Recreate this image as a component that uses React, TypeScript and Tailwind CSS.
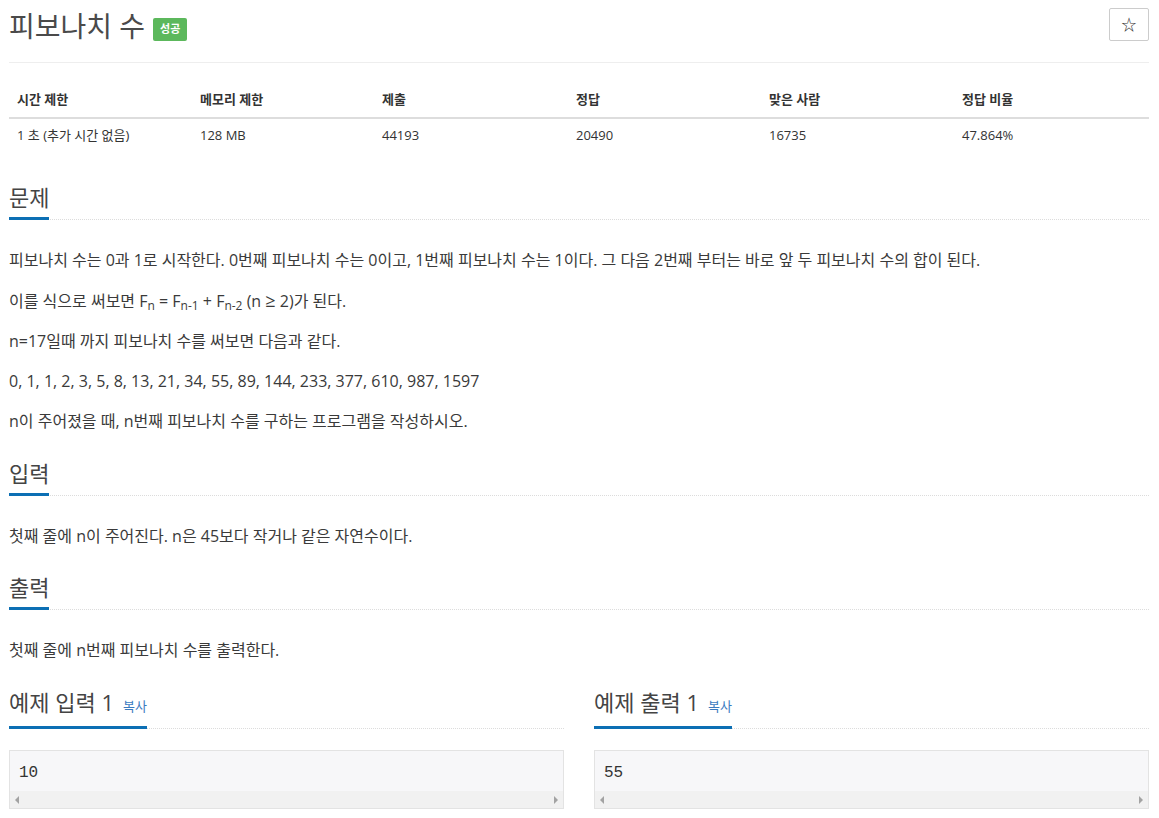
import React from "react";

const stats = [
  { label: "시간 제한", value: "1 초 (추가 시간 없음)" },
  { label: "메모리 제한", value: "128 MB" },
  { label: "제출", value: "44193" },
  { label: "정답", value: "20490" },
  { label: "맞은 사람", value: "16735" },
  { label: "정답 비율", value: "47.864%" },
];

function Headline({ title, copy }: { title: string; copy?: boolean }) {
  return (
    <div className="border-b border-dotted border-[#dcdcdc] flex">
      <h2 className="inline-flex items-baseline text-[22px] leading-[28px] pb-[6px] mb-[-1px] border-b-[3px] border-[#0c6fb4] text-[#444] font-normal">
        {title}
        {copy && <span className="ml-[9px] text-[13px] text-[#3b7bbf]">복사</span>}
      </h2>
    </div>
  );
}

function SampleBox({ text }: { text: string }) {
  return (
    <div className="mt-[21px] border border-[#e3e3e3] bg-[#f7f7f9]">
      <pre className="px-[9px] pt-[10px] pb-[6px] text-[16px] leading-[24px] text-[#333] font-['Liberation_Mono',monospace]">
        {text}
      </pre>
      <div className="h-[17px] bg-[#f1f1f1] flex items-center justify-between px-[5px]">
        <span className="w-0 h-0 border-y-[4px] border-y-transparent border-r-[4px] border-r-[#a3a3a3]" />
        <span className="w-0 h-0 border-y-[4px] border-y-transparent border-l-[4px] border-l-[#a3a3a3]" />
      </div>
    </div>
  );
}

export default function App() {
  return (
    <div className="min-h-screen bg-white px-[9px] pr-[10px] text-[#333] font-['Open_Sans','Noto_Sans_CJK_KR',sans-serif]">
      {/* Title */}
      <div className="flex items-start justify-between h-[63px] border-b border-[#eee]">
        <div className="flex items-end mt-[8px]">
          <h1 className="text-[28px] leading-[36px] text-[#4a4a4a] font-normal">피보나치 수</h1>
          <span className="ml-[8px] mb-[3px] h-[23px] px-[7px] flex items-center bg-[#5cb85c] text-white text-[11px] font-bold rounded-[2px]">
            성공
          </span>
        </div>
        <button className="mt-[8px] w-[40px] h-[33px] border border-[#ccc] rounded-[2px] bg-white text-[15px] text-[#333] flex items-center justify-center">
          ☆
        </button>
      </div>

      {/* Stats table */}
      <div className="mt-[19px] text-[13px]">
        <div className="grid grid-cols-[183px_182px_194px_193px_193px_1fr] border-b-2 border-[#ddd]">
          {stats.map((s) => (
            <div key={s.label} className="px-[8px] h-[35px] flex items-center font-bold text-[#333]">
              {s.label}
            </div>
          ))}
        </div>
        <div className="grid grid-cols-[183px_182px_194px_193px_193px_1fr]">
          {stats.map((s) => (
            <div key={s.label} className="px-[8px] h-[33px] flex items-center text-[#333]">
              {s.value}
            </div>
          ))}
        </div>
      </div>

      {/* 문제 */}
      <section className="mt-[31px]">
        <Headline title="문제" />
        <div className="mt-[28px] space-y-4 text-[16px] leading-[24px] text-[#3a3a3a]">
          <p>
            피보나치 수는 0과 1로 시작한다. 0번째 피보나치 수는 0이고, 1번째 피보나치 수는 1이다. 그 다음 2번째 부터는 바로 앞 두 피보나치 수의 합이 된다.
          </p>
          <p>
            이를 식으로 써보면 F<sub className="text-[12px]">n</sub> = F<sub className="text-[12px]">n-1</sub> + F
            <sub className="text-[12px]">n-2</sub> (n <span className="text-[18px]">≥</span> 2)가 된다.
          </p>
          <p>n=17일때 까지 피보나치 수를 써보면 다음과 같다.</p>
          <p>0, 1, 1, 2, 3, 5, 8, 13, 21, 34, 55, 89, 144, 233, 377, 610, 987, 1597</p>
          <p>n이 주어졌을 때, n번째 피보나치 수를 구하는 프로그램을 작성하시오.</p>
        </div>
      </section>

      {/* 입력 */}
      <section className="mt-[26px]">
        <Headline title="입력" />
        <div className="mt-[28px] text-[16px] leading-[24px] text-[#3a3a3a]">
          <p>첫째 줄에 n이 주어진다. n은 45보다 작거나 같은 자연수이다.</p>
        </div>
      </section>

      {/* 출력 */}
      <section className="mt-[25px]">
        <Headline title="출력" />
        <div className="mt-[28px] text-[16px] leading-[24px] text-[#3a3a3a]">
          <p>첫째 줄에 n번째 피보나치 수를 출력한다.</p>
        </div>
      </section>

      {/* 예제 */}
      <div className="mt-[26px] grid grid-cols-2 gap-[30px]">
        <section>
          <Headline title="예제 입력 1" copy />
          <SampleBox text="10" />
        </section>
        <section>
          <Headline title="예제 출력 1" copy />
          <SampleBox text="55" />
        </section>
      </div>
    </div>
  );
}
